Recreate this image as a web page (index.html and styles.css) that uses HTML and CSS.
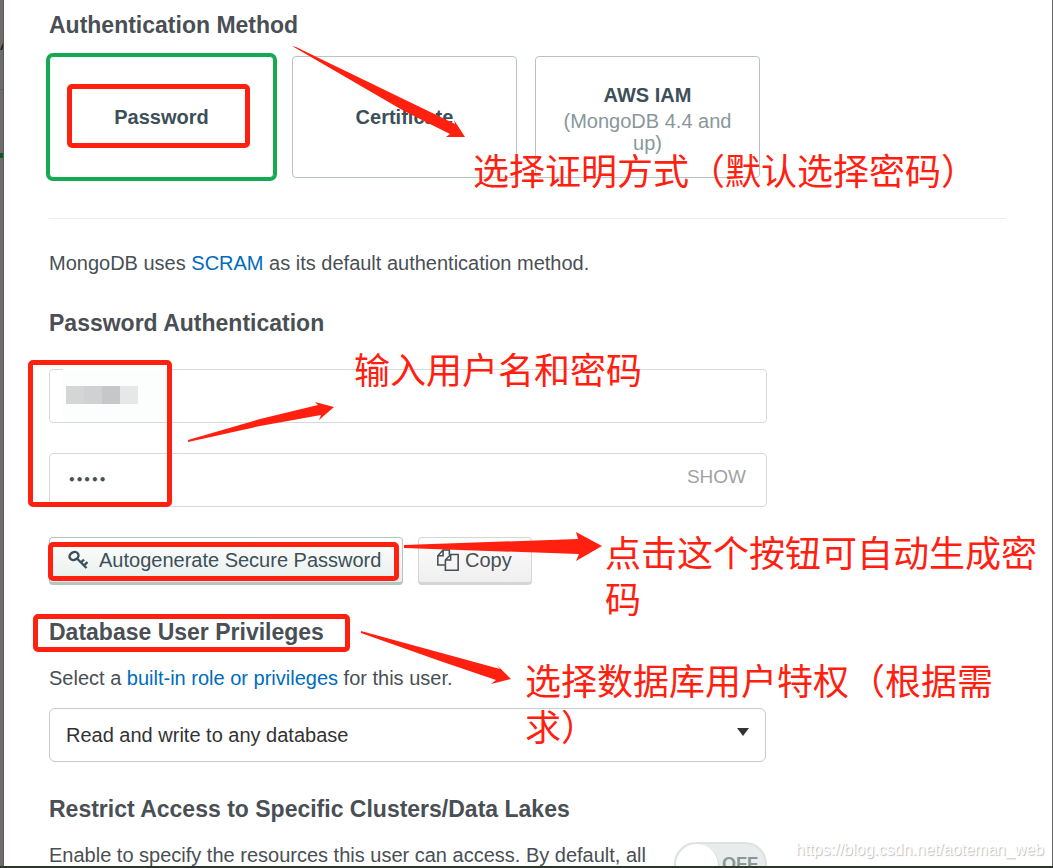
FILE: index.html
```
<!DOCTYPE html>
<html lang="en">
<head>
  <meta charset="UTF-8" />
  <meta name="viewport" content="width=device-width, initial-scale=1" />
  <title>Add New Database User</title>
  <link rel="stylesheet" href="styles.css">
</head>
<body>

<div class="page">
  <div class="main">
    <div class="backdrop">
      <div class="backdrop-title">A</div>
      <div class="backdrop-tab"></div>
    </div>

    <div class="modal">
      <h2>Authentication Method</h2>
      <div class="methods">
        <button class="method active">Password</button>
        <button class="method">Certificate</button>
        <button class="method">AWS IAM <span>(MongoDB 4.4 and up)</span></button>
      </div>
      <hr>

      <p class="scram">MongoDB uses <a href="#">SCRAM</a> as its default authentication method.</p>

      <h2>Password Authentication</h2>
      <div class="fields">
        <div class="field">
          <input type="text" id="username" aria-label="Username">
          <div class="mosaic"><i></i><i></i><i></i><i></i></div>
        </div>
        <div class="field">
          <input type="password" id="password" value="admin" aria-label="Password">
          <button class="show">SHOW</button>
        </div>
      </div>

      <div class="actions">
        <button class="btn generate">
          <svg width="20" height="20" viewBox="0 0 20 20" fill="none" stroke="currentColor" stroke-width="2.4">
            <ellipse cx="6" cy="6" rx="4.6" ry="3.8" transform="rotate(-25 6 6)"/>
            <path d="M9 8.5 L18.5 18 M13 12.5 L16 9.5 M16 15.5 L19.5 12"/>
          </svg>
          Autogenerate Secure Password
        </button>
        <button class="btn copy">
          <svg width="22" height="22" viewBox="0 0 21 21" fill="none" stroke="currentColor" stroke-width="1.5">
            <path d="M7.5 15.2 H0.8 V6.5 L5.8 1 H11.8 V5.5 M5.8 1 V6.5 H0.8"/>
            <path d="M8 20.2 V10.5 L13 5.2 H20.2 V20.2 Z M13 5.2 V10.5 H8"/>
          </svg>
          Copy
        </button>
      </div>

      <h2>Database User Privileges</h2>
      <p class="role-text">Select a <a href="#">built-in role or privileges</a> for this user.</p>
      <div class="select-wrap">
        <select id="role" aria-label="Database role">
          <option>Read and write to any database</option>
        </select>
      </div>

      <h2>Restrict Access to Specific Clusters/Data Lakes</h2>
      <div class="restrict">
        <p>Enable to specify the resources this user can access. By default, all</p>
        <label class="switch"><input type="checkbox" aria-label="Restrict access"><span>OFF</span></label>
      </div>
    </div>
  </div>
  <div class="taskbar"></div>

  <!-- red marks and notes drawn over the form -->
  <div class="marks">
    <svg width="1053" height="868" viewBox="0 0 1053 868">
      <path d="M292 46 L296 47 L455 124 L454 120 L465 137 L446 137 L450 134 L404 111 Z"/>
      <path d="M188 440 L260 419 L318 405 L315 402 L334 407 L319 420 L321 415 L260 426 L188 442 Z"/>
      <path d="M404 545 L578 539 L576 532 L602 546 L576 561 L579 554 L404 548 Z"/>
      <path d="M361 631 L500 669 L497 665 L511 679 L491 684 L496 680 L440 661 L361 633 Z"/>
    </svg>
    <div class="box box-method"></div>
    <div class="box box-login"></div>
    <div class="box box-generate"></div>
    <div class="box box-role"></div>
    <p class="note note-method">选择证明方式（默认选择密码）</p>
    <p class="note note-login">输入用户名和密码</p>
    <p class="note note-generate">点击这个按钮可自动生成密码</p>
    <p class="note note-role">选择数据库用户特权（根据需求）</p>
    <p class="watermark">https://blog.csdn.net/aoteman_web</p>
  </div>
</div>

</body>
</html>
```
FILE: styles.css
```
* {
  box-sizing: border-box;
}

body {
  margin: 0;
  font-family: "Liberation Sans", Arial, sans-serif;
  font-size: 20px;
  line-height: 28px;
  color: #494f54;
  background: #fff;
}

button, input, select {
  font: inherit;
  color: inherit;
}

.page {
  position: relative;
  height: 100vh;
  overflow: hidden;
  display: flex;
  flex-direction: column;
}

.main {
  flex: 1;
  min-height: 0;
  display: flex;
  overflow: hidden;
}

.backdrop {
  width: 4px;
  background: #6f6c69;
  border-right: 1px solid #5c5a58;
  overflow: hidden;
}

.backdrop-title {
  height: 90px;
  padding-top: 29px;
  border-bottom: 1px solid #615f5d;
  color: #1c2226;
}

.backdrop-tab {
  height: 68px;
  border-bottom: 5px solid #0c5a2c;
}

.modal {
  flex: 1;
  padding: 11px 46px 0 45px;
  border-right: 1px solid #666;
}

.taskbar {
  height: 2px;
  background: #2c3529;
}

h2 {
  margin: 0;
  font-size: 23px;
  line-height: 28px;
  font-weight: bold;
}

p {
  margin: 0;
}

a {
  color: #006cbc;
  text-decoration: none;
}

hr {
  margin: 40px 0 30px;
  border: none;
  border-top: 1px solid #e7eeec;
}

.methods {
  display: grid;
  grid-template-columns: repeat(3, 1fr);
  gap: 18px;
  max-width: 711px;
  margin-top: 17px;
}

.method {
  height: 122px;
  padding: 0 20px;
  background: #fff;
  border: 1px solid #b8c4c2;
  border-radius: 4px;
  color: #3d4f58;
  font-weight: bold;
  line-height: 22px;
  cursor: pointer;
}

.method:last-child {
  padding-top: 4px;
}

.method span {
  display: block;
  margin-top: 4px;
  color: #89979b;
  font-weight: normal;
}

.method.active {
  border-color: #13aa52;
  box-shadow: 0 0 0 3px #13aa52;
}

.scram {
  margin-bottom: 32px;
}

.fields {
  display: grid;
  gap: 30px;
  max-width: 718px;
  margin-top: 32px;
}

.field {
  position: relative;
}

.field input {
  display: block;
  width: 100%;
  height: 54px;
  padding: 0 18px;
  border: 1px solid #d7dada;
  border-radius: 4px;
  background: #fff;
}

#password {
  -webkit-text-security: square;
  font-family: "DejaVu Sans", sans-serif;
  font-size: 12px;
  font-weight: bold;
}

.show {
  position: absolute;
  top: 10px;
  right: 21px;
  padding: 0;
  border: none;
  background: none;
  color: #a0a3a3;
  font-size: 19px;
  cursor: pointer;
}

/* pixelated user name */
.mosaic {
  position: absolute;
  top: 0;
  left: 14px;
  display: flex;
  width: 104px;
  padding: 17px 0 17px 3px;
  background: #fcfefd;
}

.mosaic i {
  width: 18px;
  height: 18px;
  background: #d4d5d5;
}

.mosaic i:nth-child(2) {
  background: #d0d1d3;
}

.mosaic i:nth-child(3) {
  background: #c6c7c9;
}

.mosaic i:nth-child(4) {
  background: #e6e8e7;
}

.actions {
  display: flex;
  gap: 15px;
  margin: 30px 0 33px;
}

.btn {
  display: flex;
  align-items: center;
  height: 48px;
  padding: 0 18px;
  border: 1px solid #d3d8d7;
  border-bottom-width: 3px;
  border-radius: 4px;
  background: linear-gradient(#fdfdfd, #efefef);
  cursor: pointer;
}

.generate {
  width: 354px;
  gap: 11px;
  border-color: #b8c4c2;
  background: linear-gradient(#fff, #e7eeec);
  color: #3d4f58;
}

.copy {
  width: 114px;
  gap: 6px;
}

.role-text {
  margin: 18px 0 16px;
}

.select-wrap {
  position: relative;
  max-width: 717px;
  margin-bottom: 33px;
}

.select-wrap select {
  display: block;
  width: 100%;
  height: 54px;
  padding: 0 16px;
  border: 1px solid #c8cbcb;
  border-radius: 6px;
  background: #fff;
  color: #333;
  appearance: none;
}

.select-wrap::after {
  content: "";
  position: absolute;
  top: 20px;
  right: 17px;
  border: 6px solid transparent;
  border-top: 8px solid #333;
  border-bottom: none;
  pointer-events: none;
}

.restrict {
  display: flex;
  justify-content: space-between;
  max-width: 718px;
  margin-top: 18px;
}

.switch input {
  position: absolute;
  opacity: 0;
}

.switch span {
  display: block;
  position: relative;
  width: 93px;
  height: 44px;
  margin-top: 1px;
  padding-left: 46px;
  border: 2px solid #dde2e3;
  border-radius: 22px;
  background: #e9ecec;
  color: #89979b;
  font-size: 18px;
  font-weight: bold;
  line-height: 40px;
}

.switch span::before {
  content: "";
  position: absolute;
  top: 0;
  left: 0;
  width: 42px;
  height: 42px;
  border-radius: 50%;
  background: #fff;
  box-shadow: 1px 1px 1px #d0d6d7;
}

.marks {
  position: absolute;
  top: 0;
  left: 0;
  pointer-events: none;
}

.marks svg {
  display: block;
  fill: #ff2010;
}

.box {
  position: absolute;
  border: 5px solid #ff2010;
  border-radius: 5px;
}

.box-method {
  top: 84px;
  left: 67px;
  width: 183px;
  height: 64px;
}

.box-login {
  top: 360px;
  left: 28px;
  width: 144px;
  height: 147px;
}

.box-generate {
  top: 542px;
  left: 48px;
  width: 351px;
  height: 39px;
}

.box-role {
  top: 614px;
  left: 33px;
  width: 317px;
  height: 38px;
}

.note {
  position: absolute;
  color: #ff2010;
  font-family: "Liberation Sans", "Noto Sans CJK SC", sans-serif;
  font-size: 36px;
  line-height: 46px;
}

.note-method {
  top: 150px;
  left: 473px;
  white-space: nowrap;
}

.note-login {
  top: 349px;
  left: 354px;
  white-space: nowrap;
}

.note-generate {
  top: 532px;
  left: 605px;
  width: 440px;
}

.note-role {
  top: 660px;
  left: 525px;
  width: 480px;
}

.watermark {
  position: absolute;
  top: 836px;
  right: 9px;
  color: #fff;
  font-size: 16px;
  text-shadow: 1px 1px 1px #bbb;
}
```
